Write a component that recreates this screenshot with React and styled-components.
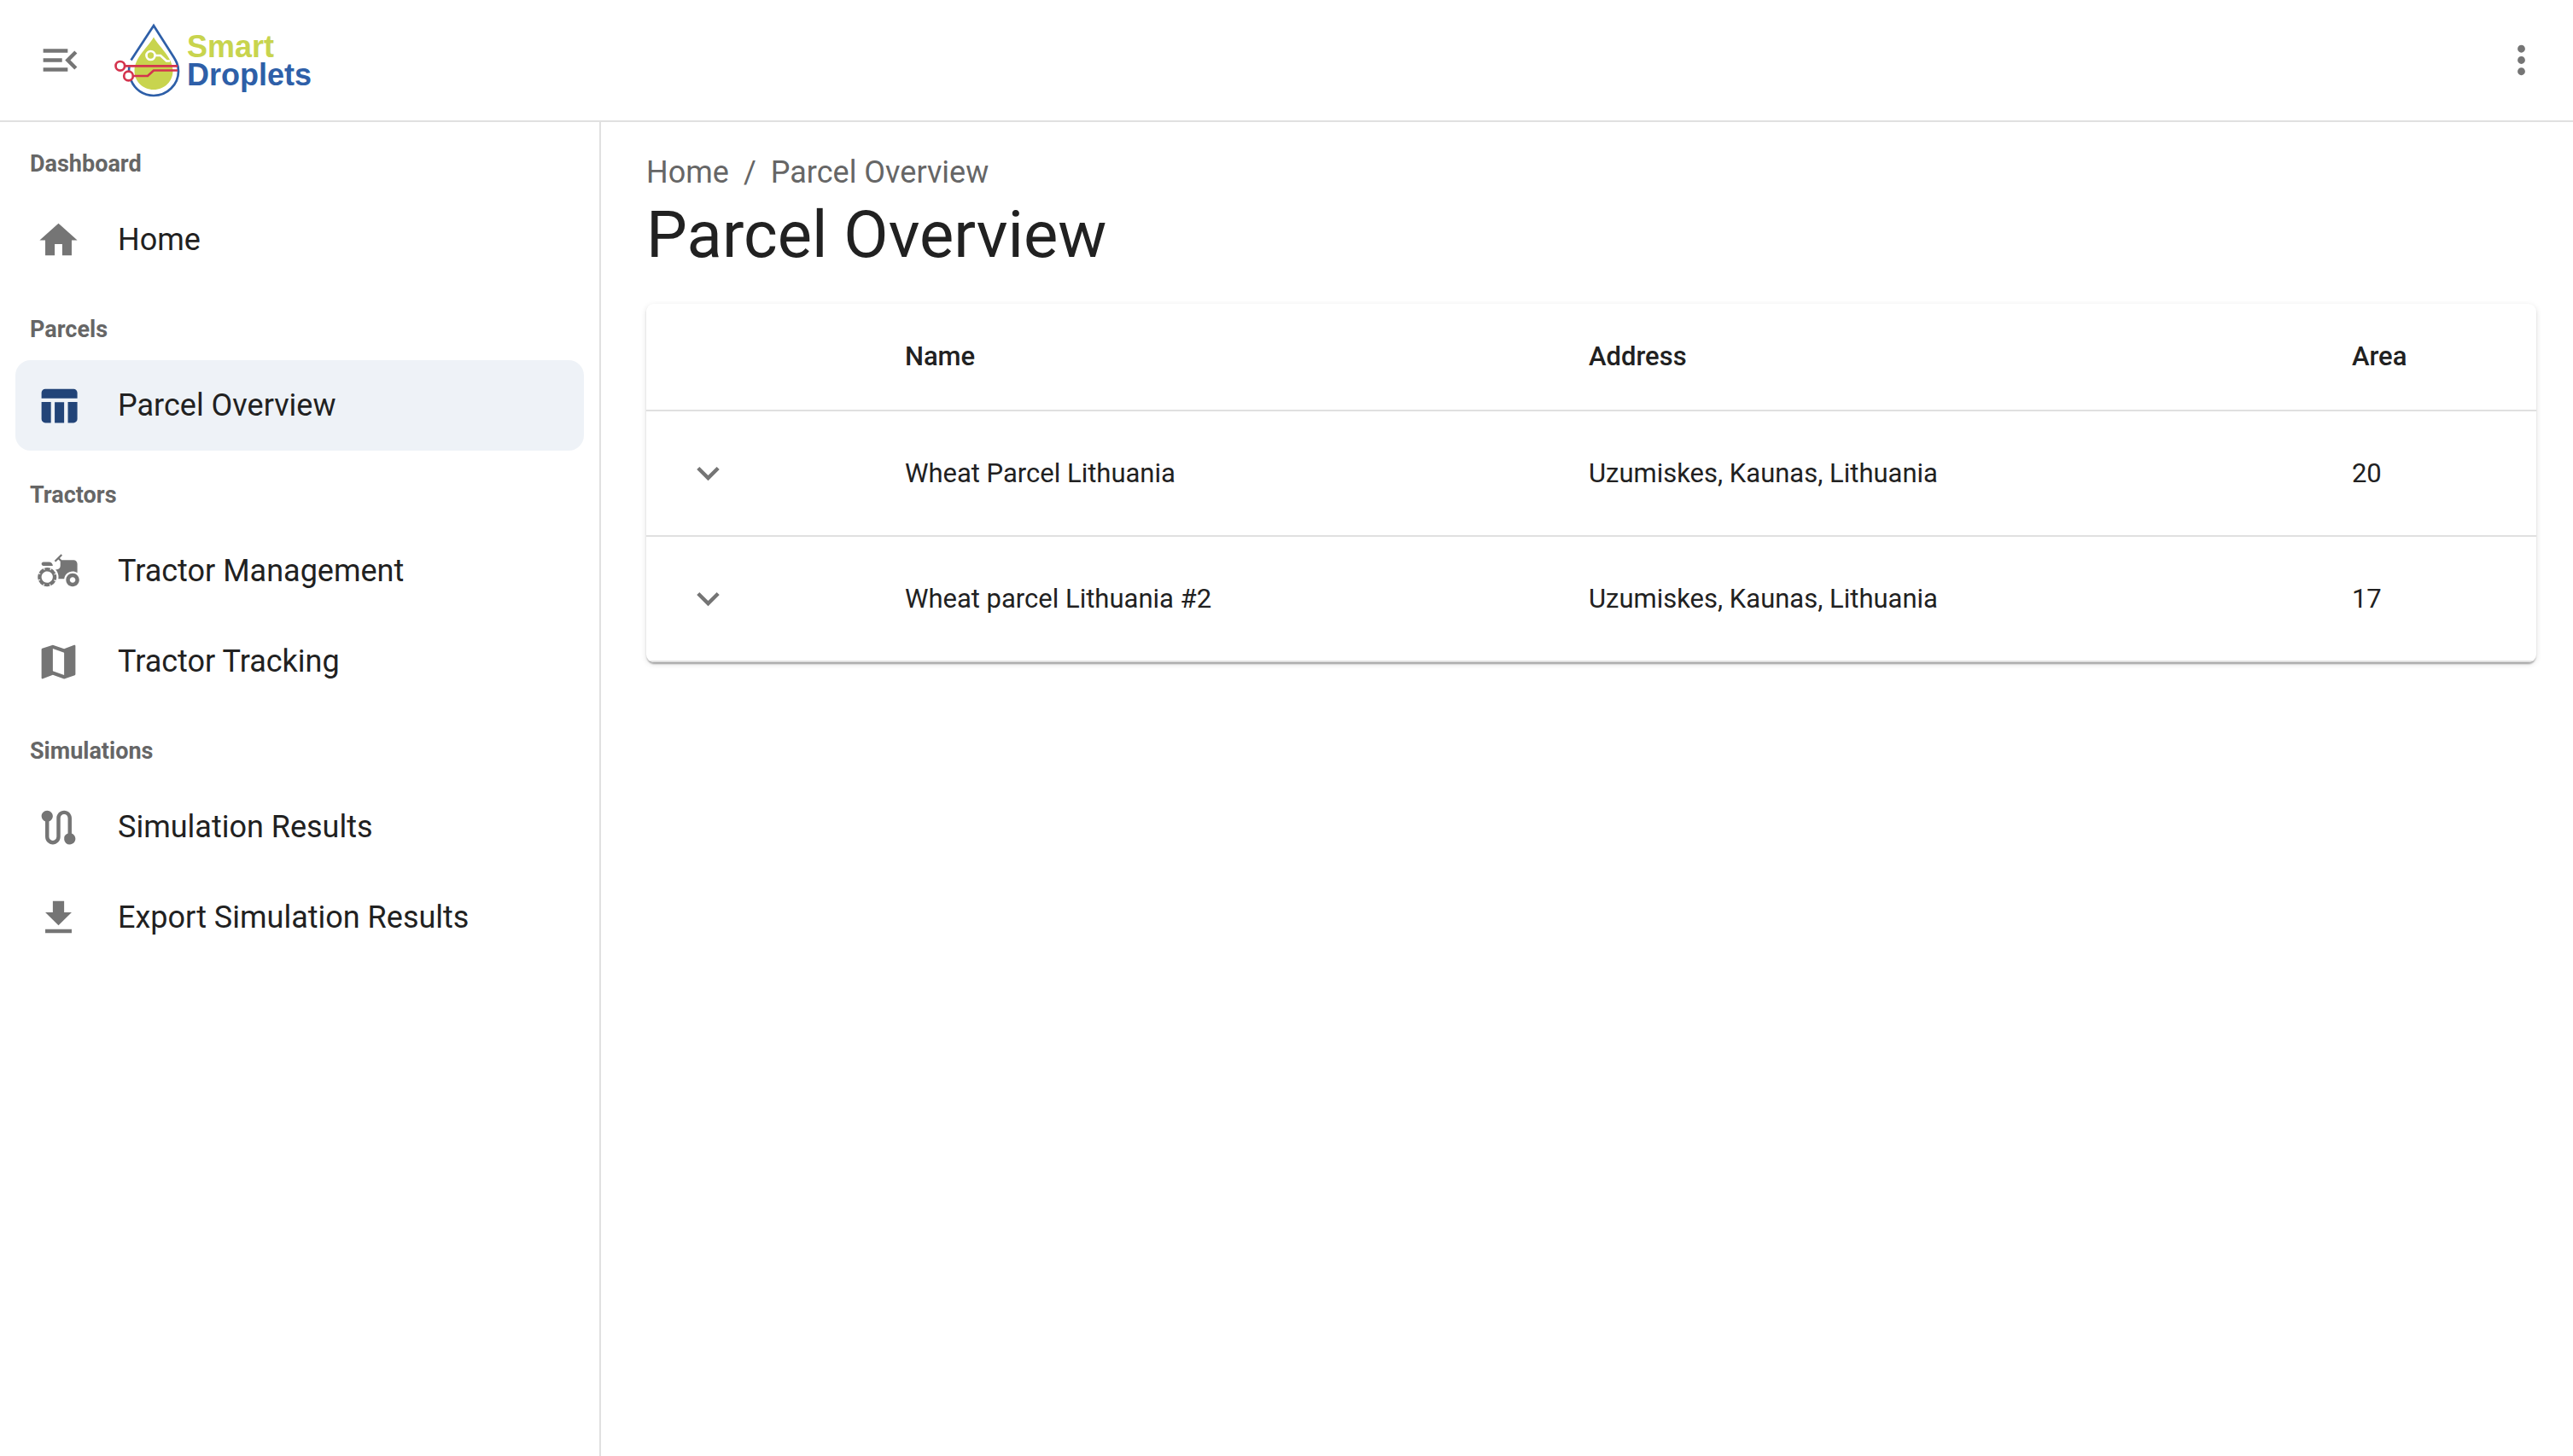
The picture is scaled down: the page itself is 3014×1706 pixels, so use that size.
import React from "react";
import styled, { createGlobalStyle } from "styled-components";
import {
  MdMenuOpen,
  MdMoreVert,
  MdHome,
  MdTableChart,
  MdAgriculture,
  MdMap,
  MdRoute,
  MdDownload,
  MdKeyboardArrowDown,
} from "react-icons/md";

const GlobalStyle = createGlobalStyle`
  *, *::before, *::after { box-sizing: border-box; }
  body {
    margin: 0;
    background: #fff;
    color: #212121;
    font-family: Roboto, "Liberation Sans", sans-serif;
    font-size: 36px;
    line-height: 53px;
  }
`;

const Page = styled.div`
  display: flex;
  flex-direction: column;
  min-height: 100vh;
`;

const TopBar = styled.header`
  display: flex;
  align-items: center;
  justify-content: space-between;
  height: 143px;
  padding: 0 23px 0 33px;
  border-bottom: 2px solid #e0e0e0;
`;

const TopBarStart = styled.div`
  display: flex;
  align-items: center;
  gap: 26px;
`;

const IconButton = styled.button`
  display: inline-flex;
  align-items: center;
  justify-content: center;
  width: 75px;
  height: 75px;
  padding: 0;
  border: 0;
  border-radius: 50%;
  background: transparent;
  color: #757575;
  cursor: pointer;
  svg {
    width: 53px;
    height: 53px;
  }
`;

const LogoLink = styled.a`
  display: flex;
  align-items: center;
  gap: 7px;
  text-decoration: none;
`;

const LogoMark = styled.svg`
  display: block;
  width: 78px;
  height: 88px;
`;

const LogoText = styled.span`
  display: flex;
  flex-direction: column;
  font-family: "Liberation Sans", Arial, sans-serif;
  font-weight: 700;
  font-size: 36px;
  line-height: 33px;
`;

const LogoWord = styled.span`
  color: ${(p) => p.$color};
`;

const Body = styled.div`
  display: flex;
  flex: 1;
`;

const Sidebar = styled.nav`
  display: flex;
  flex-direction: column;
  gap: 3px;
  flex: 0 0 704px;
  border-right: 2px solid #e0e0e0;
`;

const GroupTitle = styled.h2`
  margin: 0;
  padding: 14px 35px 1px;
  font-size: 27px;
  line-height: 70px;
  font-weight: 700;
  color: #666;
`;

const NavList = styled.ul`
  margin: 0;
  padding: 0 18px;
  list-style: none;
`;

const NavLink = styled.a`
  display: flex;
  align-items: center;
  gap: 43px;
  height: 106px;
  padding: 0 24px;
  border-radius: 18px;
  color: #212121;
  text-decoration: none;
  background: ${(p) => (p.$active ? "#eef2f7" : "transparent")};
  svg {
    width: 53px;
    height: 53px;
    color: ${(p) => (p.$active ? "#224478" : "#757575")};
  }
`;

const Main = styled.main`
  flex: 1;
  min-width: 0;
  padding: 33px 43px 53px 53px;
`;

const Crumbs = styled.ol`
  display: flex;
  gap: 17px;
  margin: 0;
  padding: 0;
  list-style: none;
  color: #666;
`;

const CrumbLink = styled.a`
  color: inherit;
  text-decoration: none;
`;

const Title = styled.h1`
  margin: 0 0 35px;
  font-size: 76px;
  line-height: 92px;
  font-weight: 400;
`;

const Card = styled.div`
  border-radius: 9px;
  overflow: hidden;
  background: #fff;
  box-shadow:
    0 4px 2px -2px rgba(0, 0, 0, 0.2),
    0 2px 2px rgba(0, 0, 0, 0.14),
    0 2px 7px rgba(0, 0, 0, 0.12);
`;

const Table = styled.table`
  width: 100%;
  border-collapse: separate;
  border-spacing: 0;
  font-size: 31px;
  text-align: left;
`;

const HeadCell = styled.th`
  width: ${(p) => p.$width || "auto"};
  padding: 35px;
  line-height: 54px;
  font-weight: 500;
  border-bottom: 2px solid #e0e0e0;
`;

const Cell = styled.td`
  padding: 35px;
  line-height: 44px;
  border-bottom: 2px solid #e0e0e0;
  vertical-align: middle;
  ${IconButton} {
    display: flex;
  }
`;

const groups = [
  { title: "Dashboard", items: [{ label: "Home", Icon: MdHome }] },
  { title: "Parcels", items: [{ label: "Parcel Overview", Icon: MdTableChart, active: true }] },
  {
    title: "Tractors",
    items: [
      { label: "Tractor Management", Icon: MdAgriculture },
      { label: "Tractor Tracking", Icon: MdMap },
    ],
  },
  {
    title: "Simulations",
    items: [
      { label: "Simulation Results", Icon: MdRoute },
      { label: "Export Simulation Results", Icon: MdDownload },
    ],
  },
];

const parcels = [
  { name: "Wheat Parcel Lithuania", address: "Uzumiskes, Kaunas, Lithuania", area: 20 },
  { name: "Wheat parcel Lithuania #2", address: "Uzumiskes, Kaunas, Lithuania", area: 17 },
];

function Logo() {
  return (
    <LogoLink href="#" aria-label="Smart Droplets">
      <LogoMark viewBox="0 0 78 88" fill="none" aria-hidden="true">
        <path
          d="M46 16.5C40 28 23.500 40 23.500 56C23.500 68 33 78 46 78C59 78 68.500 68 68.500 56C68.500 40 52 28 46 16.500Z"
          fill="#c8d44e"
        />
        <path
          d="M19.500 43.500L46 3L67 36C72.500 44.500 75 49 75 56.500C75 72 62 85 46 85C34 85 24 78 19.500 67M17 57C17 55 17 53 17.500 51"
          stroke="#2e5fa8"
          strokeWidth="2.700"
        />
        <circle cx="42.500" cy="38" r="5" stroke="#fff" strokeWidth="2.700" />
        <path d="M48 38H54L61 44.500H65" stroke="#fff" strokeWidth="2.700" />
        <path d="M12 50.300H74M22 62H39L46 55.500H74" stroke="#d4344e" strokeWidth="2.700" />
        <circle cx="6.800" cy="50.300" r="5.300" fill="#fff" stroke="#d4344e" strokeWidth="2.700" />
        <circle cx="16.500" cy="62" r="5.300" fill="#fff" stroke="#d4344e" strokeWidth="2.700" />
      </LogoMark>
      <LogoText>
        <LogoWord $color="#c8d44e">Smart</LogoWord>
        <LogoWord $color="#2e5fa8">Droplets</LogoWord>
      </LogoText>
    </LogoLink>
  );
}

export default function App() {
  return (
    <Page>
      <GlobalStyle />
      <TopBar>
        <TopBarStart>
          <IconButton type="button" aria-label="Collapse menu">
            <MdMenuOpen />
          </IconButton>
          <Logo />
        </TopBarStart>
        <IconButton type="button" aria-label="More options">
          <MdMoreVert />
        </IconButton>
      </TopBar>
      <Body>
        <Sidebar aria-label="Main">
          {groups.map((group) => (
            <section key={group.title}>
              <GroupTitle>{group.title}</GroupTitle>
              <NavList>
                {group.items.map(({ label, Icon, active }) => (
                  <li key={label}>
                    <NavLink href="#" $active={active} aria-current={active ? "page" : undefined}>
                      <Icon aria-hidden="true" />
                      {label}
                    </NavLink>
                  </li>
                ))}
              </NavList>
            </section>
          ))}
        </Sidebar>
        <Main>
          <nav aria-label="Breadcrumb">
            <Crumbs>
              <li>
                <CrumbLink href="#">Home</CrumbLink>
              </li>
              <li aria-hidden="true">/</li>
              <li aria-current="page">Parcel Overview</li>
            </Crumbs>
          </nav>
          <Title>Parcel Overview</Title>
          <Card>
            <Table>
              <thead>
                <tr>
                  <HeadCell $width="12.1%" aria-label="Details" />
                  <HeadCell scope="col">Name</HeadCell>
                  <HeadCell scope="col">Address</HeadCell>
                  <HeadCell scope="col">Area</HeadCell>
                </tr>
              </thead>
              <tbody>
                {parcels.map((parcel) => (
                  <tr key={parcel.name}>
                    <Cell>
                      <IconButton type="button" aria-label={`Expand ${parcel.name}`}>
                        <MdKeyboardArrowDown />
                      </IconButton>
                    </Cell>
                    <Cell>{parcel.name}</Cell>
                    <Cell>{parcel.address}</Cell>
                    <Cell>{parcel.area}</Cell>
                  </tr>
                ))}
              </tbody>
            </Table>
          </Card>
        </Main>
      </Body>
    </Page>
  );
}
